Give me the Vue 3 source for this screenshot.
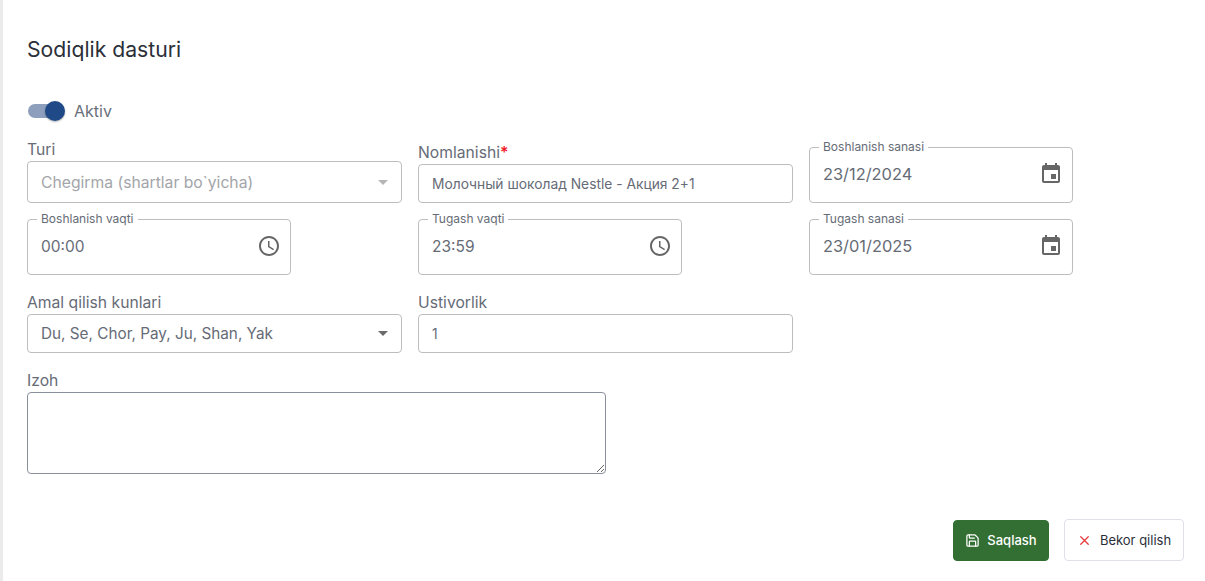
<script setup>
const calendar = 'M17 12h-5v5h5v-5zM16 1v2H8V1H6v2H5c-1.11 0-1.99.9-1.99 2L3 19c0 1.1.89 2 2 2h14c1.1 0 2-.9 2-2V5c0-1.1-.9-2-2-2h-1V1h-2zm3 18H5V8h14v11z'
const clock = 'M11.99 2C6.47 2 2 6.48 2 12s4.47 10 9.99 10C17.52 22 22 17.52 22 12S17.52 2 11.99 2zM12 20c-4.42 0-8-3.58-8-8s3.58-8 8-8 8 3.58 8 8-3.58 8-8 8zM12.5 7H11v6l5.25 3.15.75-1.23-4.5-2.67z'
</script>

<template>
  <main class="page">
    <h1 class="title">Sodiqlik dasturi</h1>

    <div class="toggle-row">
      <span class="switch"><span class="thumb"></span></span>
      <span class="toggle-label">Aktiv</span>
    </div>

    <section class="grid">
      <div class="field turi">
        <div class="label">Turi</div>
        <div class="box select disabled">
          <span>Chegirma (shartlar bo`yicha)</span>
          <span class="caret"></span>
        </div>
      </div>

      <div class="field">
        <div class="label">Nomlanishi<span class="req">*</span></div>
        <div class="box plain"><span>Молочный шоколад Nestle - Акция 2+1</span></div>
      </div>

      <div class="outlined">
        <span class="legend">Boshlanish sanasi</span>
        <span class="value date">23/12/2024</span>
        <svg class="icon" viewBox="0 0 24 24"><path :d="calendar" /></svg>
      </div>

      <div class="outlined">
        <span class="legend">Boshlanish vaqti</span>
        <span class="value">00:00</span>
        <svg class="icon" viewBox="0 0 24 24"><path :d="clock" /></svg>
      </div>

      <div class="outlined">
        <span class="legend">Tugash vaqti</span>
        <span class="value">23:59</span>
        <svg class="icon" viewBox="0 0 24 24"><path :d="clock" /></svg>
      </div>

      <div class="outlined">
        <span class="legend">Tugash sanasi</span>
        <span class="value date">23/01/2025</span>
        <svg class="icon" viewBox="0 0 24 24"><path :d="calendar" /></svg>
      </div>

      <div class="field low">
        <div class="label">Amal qilish kunlari</div>
        <div class="box select days">
          <span>Du, Se, Chor, Pay, Ju, Shan, Yak</span>
          <span class="caret dark"></span>
        </div>
      </div>

      <div class="field low">
        <div class="label">Ustivorlik</div>
        <div class="box plain"><span>1</span></div>
      </div>
    </section>

    <section class="note">
      <div class="label">Izoh</div>
      <textarea class="area"></textarea>
    </section>

    <footer class="actions">
      <button class="btn save">
        <svg class="btn-icon" viewBox="0 0 24 24" fill="none" stroke="#fff" stroke-width="2" stroke-linecap="round" stroke-linejoin="round">
          <path d="M15.2 3a2 2 0 0 1 1.4.6l3.8 3.8a2 2 0 0 1 .6 1.4V19a2 2 0 0 1-2 2H5a2 2 0 0 1-2-2V5a2 2 0 0 1 2-2z" />
          <path d="M17 21v-7a1 1 0 0 0-1-1H8a1 1 0 0 0-1 1v7" />
          <path d="M7 3v4a1 1 0 0 0 1 1h7" />
        </svg>
        <span>Saqlash</span>
      </button>
      <button class="btn cancel">
        <svg class="btn-icon" viewBox="0 0 24 24" fill="none" stroke="#e5383b" stroke-width="2" stroke-linecap="round">
          <path d="M18 6 6 18M6 6l12 12" />
        </svg>
        <span>Bekor qilish</span>
      </button>
    </footer>
  </main>
</template>

<style scoped>
.page {
  box-sizing: border-box;
  width: 1205px;
  height: 581px;
  overflow: hidden;
  padding: 36px 21px 0 24px;
  margin: 0;
  background: #fff;
  border-left: 3px solid #ebebeb;
  font-family: Inter, "Noto Sans", sans-serif;
  color: #5f6470;
}
.title {
  margin: 0;
  font-size: 21.2px;
  line-height: 26px;
  font-weight: 400;
  color: #2b2f38;
}
.toggle-row {
  display: flex;
  align-items: center;
  gap: 12px;
  margin-top: 37px;
  height: 24px;
}
.switch {
  position: relative;
  display: block;
  width: 34px;
  height: 14px;
  margin-left: 1px;
  border-radius: 7px;
  background: #8d9fbd;
}
.thumb {
  position: absolute;
  right: -3px;
  top: -3px;
  width: 20px;
  height: 20px;
  border-radius: 50%;
  background: #1f4a87;
  box-shadow: 0 1px 2px rgba(0, 0, 0, 0.3);
}
.toggle-label {
  font-size: 16px;
  color: #6a6f7a;
}
.grid {
  display: grid;
  grid-template-columns: 375px 375px 264px;
  column-gap: 16px;
  row-gap: 16px;
  align-items: end;
  margin-top: 18px;
}
.label {
  font-size: 15.7px;
  line-height: 18px;
  color: #666b76;
}
.req {
  color: #f01d2c;
  font-weight: 600;
}
.field .label {
  margin-bottom: 2px;
}
.box {
  box-sizing: border-box;
  display: flex;
  align-items: center;
  justify-content: space-between;
  height: 39px;
  padding: 0 13px;
  border: 1px solid #bdbdbd;
  border-radius: 4px;
  font-size: 14px;
  color: #666b76;
}
.plain {
  font-size: 13.8px;
}
.select {
  padding-right: 13px;
  font-size: 15.7px;
}
.select.days {
  font-size: 15.3px;
}
.turi .box {
  height: 42px;
}
.disabled {
  color: #a3a5a9;
}
.caret {
  width: 0;
  height: 0;
  border-left: 5px solid transparent;
  border-right: 5px solid transparent;
  border-top: 5px solid #b5b5b5;
}
.caret.dark {
  border-top-color: #6b6b6b;
}
.outlined {
  position: relative;
  box-sizing: border-box;
  display: flex;
  align-items: center;
  justify-content: space-between;
  width: 264px;
  height: 56px;
  padding: 0 9px 2px 13px;
  border: 1px solid #bdbdbd;
  border-radius: 4px;
}
.legend {
  position: absolute;
  left: 9px;
  top: -8px;
  padding: 0 4px;
  background: #fff;
  font-size: 12px;
  line-height: 14px;
  color: #666b76;
}
.value {
  font-size: 15.5px;
  color: #666b76;
}
.value.date {
  font-size: 16.4px;
}
.icon {
  width: 24px;
  height: 24px;
  fill: #666;
}
.low {
  margin-top: 3px;
}
.note {
  margin-top: 19px;
}
.note .label {
  margin-bottom: 2px;
}
.area {
  display: block;
  box-sizing: border-box;
  width: 579px;
  height: 82px;
  margin: 0;
  padding: 8px;
  border: 1px solid #8a8f9c;
  border-radius: 4px;
  background: #fff;
  outline: none;
  resize: both;
}
.actions {
  display: flex;
  justify-content: flex-end;
  align-items: center;
  gap: 15px;
  margin-top: 45px;
}
.btn {
  box-sizing: border-box;
  display: flex;
  align-items: center;
  justify-content: center;
  gap: 7px;
  margin: 0;
  padding: 0;
  border-radius: 4px;
  font-family: Inter, "Noto Sans", sans-serif;
  font-size: 13px;
  font-weight: 500;
}
.btn-icon {
  width: 15px;
  height: 15px;
}
.save {
  width: 96px;
  height: 41px;
  border: 1px solid #336f33;
  background: #336f33;
  color: #fff;
}
.cancel {
  width: 120px;
  height: 42px;
  gap: 8px;
  border: 1px solid #e0e1e8;
  background: #fff;
  color: #2b2f38;
  font-weight: 400;
}
</style>
